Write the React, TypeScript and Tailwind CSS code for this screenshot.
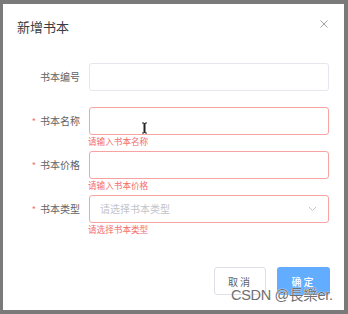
import React from "react";

const font = { fontFamily: '"Noto Sans CJK SC", "Noto Sans", sans-serif' };

function Row({
  label,
  required,
  error,
  placeholder,
  select,
  cursor,
}: {
  label: string;
  required?: boolean;
  error?: string;
  placeholder?: string;
  select?: boolean;
  cursor?: boolean;
}) {
  return (
    <div className="flex items-start h-[44px]">
      <div className="w-[72px] h-[28px] flex items-center justify-end pr-[9px] text-[10px] text-[#606266] leading-none">
        {required && <span className="text-[#f56c6c] mr-[4px] text-[9px]">*</span>}
        {label}
      </div>
      <div className="relative w-[240px]">
        <div
          className={`h-[28px] rounded-[3px] border bg-white flex items-center px-[10px] ${
            error ? "border-[#f7a3a3]" : "border-[#e4e7ed]"
          }`}
        >
          {placeholder && (
            <span className="text-[10px] text-[#c0c4cc] leading-none">{placeholder}</span>
          )}
          {select && (
            <svg
              className="ml-auto mr-[1px]"
              width="9"
              height="6"
              viewBox="0 0 9 6"
              fill="none"
            >
              <path d="M1 1l3.5 3.5L8 1" stroke="#c0c4cc" strokeWidth="1" />
            </svg>
          )}
          {cursor && (
            <svg
              className="absolute left-[52px] top-[15px]"
              width="7"
              height="12"
              viewBox="0 0 7 12"
              fill="none"
            >
              <path
                d="M1 1h2v10H1M6 1H4v10h2M3.5 1v10"
                stroke="#222"
                strokeWidth="1"
              />
            </svg>
          )}
        </div>
        {error && (
          <div className="absolute left-[-1px] top-[30px] text-[8.6px] leading-none text-[#f56c6c]">
            {error}
          </div>
        )}
      </div>
    </div>
  );
}

export default function App() {
  return (
    <div className="w-[348px] h-[314px] bg-[#7a7a7a] pt-[4px] pl-[3px] pr-[4px] pb-[4px]" style={font}>
      <div className="relative w-[341px] h-[306px] bg-white">
        <div className="flex items-center justify-between pl-[14px] pr-[16px] pt-[13px] h-[32px]">
          <span className="text-[13px] text-[#3a3b3e] leading-none">新增书本</span>
          <svg width="8" height="8" viewBox="0 0 8 8" className="mt-[-6px]">
            <path d="M0.5 0.5l7 7M7.5 0.5l-7 7" stroke="#a0a3a9" strokeWidth="1" />
          </svg>
        </div>
        <div className="pl-[14px] pt-[27px]">
          <Row label="书本编号" />
          <Row label="书本名称" required error="请输入书本名称" cursor />
          <Row label="书本价格" required error="请输入书本价格" />
          <Row
            label="书本类型"
            required
            error="请选择书本类型"
            placeholder="请选择书本类型"
            select
          />
        </div>
        <div className="flex justify-end gap-[11px] pr-[14px] pt-[28px]">
          <div className="w-[52px] h-[28px] rounded-[3px] border border-[#dcdfe6] flex items-center justify-center text-[10px] text-[#606266] tracking-[2px]">
            取消
          </div>
          <div className="w-[53px] h-[28px] rounded-[3px] bg-[#62adff] flex items-center justify-center text-[10px] text-white tracking-[2px] font-medium">
            确定
          </div>
        </div>
        <div
          className="absolute left-[228px] top-[284px] text-[14.5px] leading-none text-[#6f6f6f] tracking-[-0.3px]"
          style={{
            fontFamily: '"Liberation Sans", "Noto Sans CJK TC", sans-serif',
            textShadow: "0 0 1px #fff, 0 0 1px #fff",
          }}
        >
          CSDN @長樂er.
        </div>
      </div>
    </div>
  );
}
